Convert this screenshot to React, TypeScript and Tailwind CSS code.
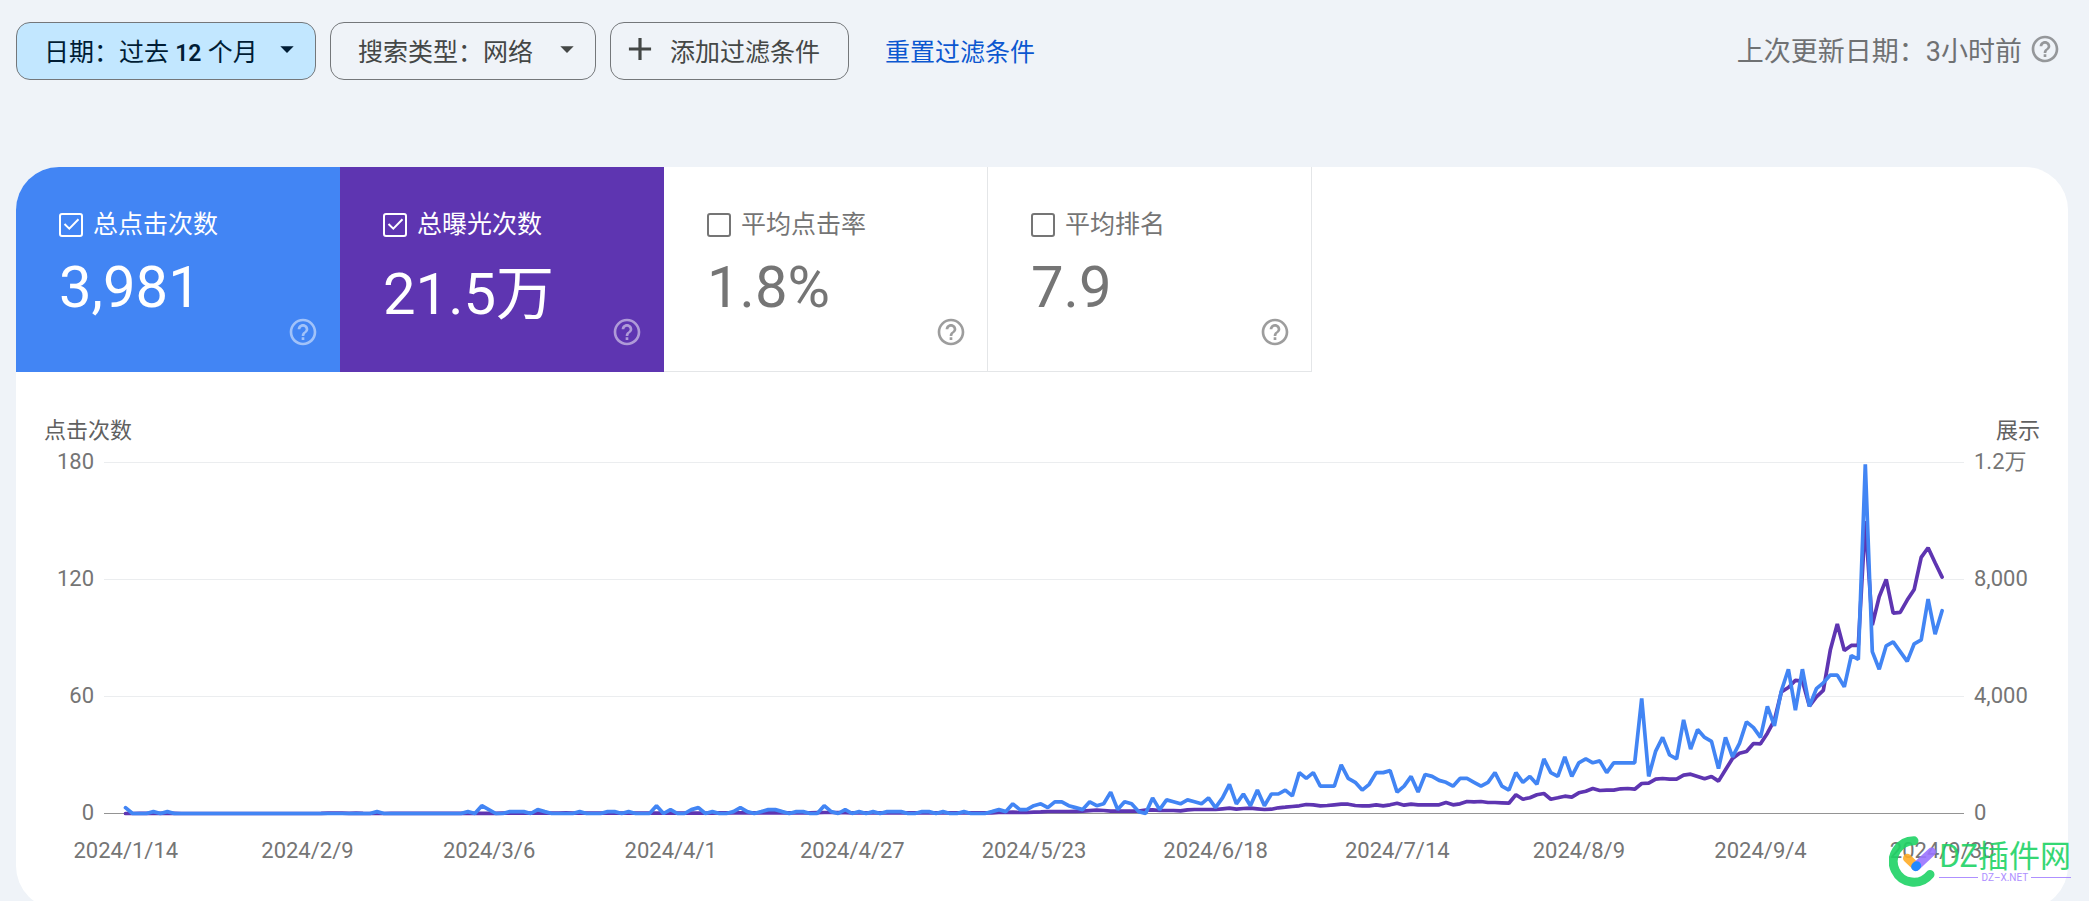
import { useState, type ReactNode } from "react";
import { MdAdd, MdArrowDropDown, MdHelpOutline } from "react-icons/md";

// Daily clicks, 2024/1/14 to 2024/9/30
const clicks = [
  3, 0, 0, 0, 1, 0, 1, 0, 0, 0, 0, 0, 0, 0, 0, 0, 0, 0, 0, 0, 0, 0, 0, 0, 0,
  0, 0, 0, 0, 0, 0, 0, 0, 0, 0, 0, 1, 0, 0, 0, 0, 0, 0, 0, 0, 0, 0, 0, 0, 1,
  0, 4, 2, 0, 0, 1, 1, 1, 0, 2, 1, 0, 0, 0, 0, 1, 0, 0, 0, 1, 1, 0, 1, 0, 0,
  0, 4, 0, 2, 0, 0, 2, 3, 0, 1, 0, 0, 1, 3, 1, 0, 1, 2, 2, 1, 0, 1, 1, 0, 0,
  4, 1, 0, 2, 0, 1, 0, 1, 0, 1, 1, 1, 0, 0, 1, 1, 0, 1, 0, 0, 1, 0, 0, 0, 1,
  2, 1, 5, 2, 2, 4, 5, 3, 6, 6, 4, 3, 2, 6, 4, 5, 11, 2, 6, 5, 1, 0, 8, 2, 7,
  6, 5, 7, 6, 5, 8, 3, 8, 15, 5, 10, 4, 12, 4, 10, 10, 12, 9, 21, 18, 21, 14, 14, 14, 25,
  18, 16, 12, 15, 21, 21, 22, 11, 14, 19, 11, 20, 19, 17, 16, 14, 18, 18, 16, 14, 16, 21, 14, 12, 21,
  16, 19, 15, 28, 21, 19, 29, 19, 26, 28, 26, 27, 21, 26, 26, 26, 26, 59, 19, 32, 39, 30, 28, 48, 33,
  43, 39, 37, 23, 39, 29, 36, 47, 44, 39, 55, 45, 63, 74, 53, 74, 55, 64, 67, 71, 71, 65, 81, 79, 179,
  83, 74, 86, 88, 83, 78, 87, 89, 110, 92, 104,
];

// Daily impressions over the same period
const impressions = [
  0, 0, 5, 5, 5, 5, 5, 5, 0, 0, 0, 0, 0, 0, 0, 0, 0, 0, 0, 0, 0, 0, 0, 0, 0,
  0, 0, 0, 5, 10, 10, 10, 5, 10, 5, 0, 0, 0, 5, 5, 5, 5, 5, 5, 5, 5, 5, 5, 5, 5,
  5, 5, 5, 5, 10, 10, 10, 10, 10, 10, 10, 10, 15, 20, 15, 10, 10, 10, 10, 10, 15, 15, 15, 15, 15,
  15, 15, 15, 15, 15, 15, 15, 15, 15, 15, 20, 20, 20, 25, 25, 25, 25, 25, 25, 20, 20, 20, 20, 25, 30,
  35, 35, 30, 30, 25, 25, 20, 20, 20, 25, 25, 25, 20, 20, 25, 25, 25, 20, 20, 20, 20, 20, 20, 20, 25,
  35, 40, 45, 35, 35, 45, 55, 68, 70, 70, 70, 75, 80, 95, 114, 102, 80, 80, 80, 80, 80, 115, 125, 102, 102,
  102, 90, 125, 137, 137, 137, 137, 160, 182, 148, 171, 182, 160, 137, 148, 194, 217, 239, 262, 308, 296, 262, 274, 296, 319,
  319, 274, 262, 262, 296, 262, 296, 353, 285, 319, 296, 296, 296, 296, 376, 296, 331, 410, 399, 410, 376, 376, 365, 353, 638,
  490, 536, 638, 684, 490, 536, 593, 559, 707, 764, 855, 787, 798, 800, 844, 855, 832, 1026, 1037, 1174, 1197, 1174, 1174, 1311, 1345,
  1265, 1186, 1265, 1106, 1493, 1881, 2063, 2120, 2394, 2383, 2747, 3192, 4161, 4309, 4549, 4526, 3671, 3990, 4207, 5586, 6475, 5575, 5746, 5746, 10000,
  6441, 7410, 8003, 6851, 6874, 7296, 7661, 8755, 9086, 8573, 8083,
];

const dates = [
  "2024/1/14", "2024/2/9", "2024/3/6", "2024/4/1", "2024/4/27", "2024/5/23",
  "2024/6/18", "2024/7/14", "2024/8/9", "2024/9/4", "2024/9/30",
];

const PLOT_W = 1860;
const PLOT_H = 351;

function toPoints(values: number[], max: number) {
  return values
    .map((v, i) => {
      const x = 21.5 + i * 6.987;
      const y = PLOT_H + 0.5 - (v / max) * PLOT_H;
      return `${x.toFixed(1)},${y.toFixed(1)}`;
    })
    .join(" ");
}

function Series({ values, max, color }: { values: number[]; max: number; color: string }) {
  return (
    <polyline
      points={toPoints(values, max)}
      fill="none"
      stroke={color}
      strokeWidth="3.700"
      strokeLinejoin="bevel"
      strokeLinecap="round"
      vectorEffect="non-scaling-stroke"
    />
  );
}

function FilterChip({ active, className, children }: { active?: boolean; className: string; children: ReactNode }) {
  return (
    <button
      type="button"
      aria-haspopup="menu"
      className={`flex h-[58px] items-center justify-between rounded-[14px] border border-[#74777a] pl-[27px] pr-3 ${
        active ? "bg-[#c2e7ff] text-[#001d35]" : "text-[#444746]"
      } ${className}`}
    >
      <span className="whitespace-pre pt-1">{children}</span>
      <MdArrowDropDown className="mb-1 size-8 shrink-0" />
    </button>
  );
}

interface Metric {
  id: string;
  label: string;
  value: string;
  unit?: string;
  tone: string;
  helpTone: string;
  on: boolean;
}

const plainTone = "text-[#757575] shadow-[inset_-1px_-1px_0_#e4e6e8]";

const metrics: Metric[] = [
  { id: "clicks", label: "总点击次数", value: "3,981", tone: "bg-[#4285f4] text-white", helpTone: "opacity-50", on: true },
  { id: "impressions", label: "总曝光次数", value: "21.5", unit: "万", tone: "bg-[#5e35b1] text-white", helpTone: "opacity-50", on: true },
  { id: "ctr", label: "平均点击率", value: "1.8%", tone: plainTone, helpTone: "opacity-70", on: false },
  { id: "position", label: "平均排名", value: "7.9", tone: plainTone, helpTone: "opacity-70", on: false },
];

function MetricTile({ metric }: { metric: Metric }) {
  const [checked, setChecked] = useState(metric.on);
  return (
    <div className={`relative h-[205px] w-[324px] pl-[43px] pt-10 ${metric.tone}`}>
      <label htmlFor={metric.id} className="flex items-center gap-[10px] text-[25px] leading-9">
        <span className="grid size-6 place-items-center">
          <input
            id={metric.id}
            type="checkbox"
            checked={checked}
            onChange={(e) => setChecked(e.target.checked)}
            className="col-start-1 row-start-1 size-6 appearance-none rounded-[3px] border-2 border-current"
          />
          {checked && (
            <svg viewBox="0 0 24 24" className="pointer-events-none col-start-1 row-start-1 size-6" aria-hidden="true">
              <path d="M5.500 11 L10.3 15.6 L19.500 6.2" fill="none" stroke="currentColor" strokeWidth="2" />
            </svg>
          )}
        </span>
        {metric.label}
      </label>
      <div className="mt-[10px] text-[58px] leading-[68px]">
        {metric.value}
        {metric.unit && <span className="font-['Noto_Sans_CJK_SC',sans-serif] leading-[73px]">{metric.unit}</span>}
      </div>
      <button type="button" aria-label="帮助" className={`absolute bottom-6 right-[21px] ${metric.helpTone}`}>
        <MdHelpOutline className="size-8" />
      </button>
    </div>
  );
}

function AxisLabels({ values, className }: { values: string[]; className: string }) {
  return (
    <div className={`flex h-[351px] shrink-0 flex-col justify-between ${className}`}>
      {values.map((v) => (
        <div key={v} className="flex h-0 items-center">
          {v}
        </div>
      ))}
    </div>
  );
}

function Chart() {
  return (
    <section className="text-[22px] leading-7 text-[#757575]">
      <div className="flex justify-between pl-7 pr-7 pt-[45px] text-[#616161]">
        <span>点击次数</span>
        <span>展示</span>
      </div>
      <div className="mt-[17px] flex">
        <AxisLabels values={["180", "120", "60", "0"]} className="w-[88px] items-end pr-[10px]" />
        <svg
          viewBox={`0 0 ${PLOT_W} ${PLOT_H + 1}`}
          preserveAspectRatio="none"
          className="h-[352px] min-w-0 flex-1 overflow-visible"
          role="img"
          aria-label="点击次数 / 展示"
        >
          {[0, 117, 234].map((y) => (
            <line key={y} x1="0" x2={PLOT_W} y1={y + 0.5} y2={y + 0.5} stroke="#ebedef" />
          ))}
          <line x1="0" x2={PLOT_W} y1={PLOT_H + 0.5} y2={PLOT_H + 0.5} stroke="#949494" />
          <Series values={impressions} max={12000} color="#5e35b1" />
          <Series values={clicks} max={180} color="#4285f4" />
        </svg>
        <AxisLabels values={["1.2万", "8,000", "4,000", "0"]} className="w-[104px] items-start pl-[10px]" />
      </div>
      <div className="mt-[23px] grid grid-cols-11 pl-[19px] pr-[35px] text-center">
        {dates.map((d) => (
          <span key={d}>{d}</span>
        ))}
      </div>
    </section>
  );
}

function Watermark() {
  return (
    <div className="absolute bottom-[14px] right-[18px] flex items-center opacity-90">
      <svg viewBox="0 0 150 152" className="h-[51px] w-[50px]" aria-hidden="true">
        <path d="M75 14 A62 62 0 1 0 123 115" fill="none" stroke="#1fd365" strokeWidth="27" strokeLinecap="round" />
        <path d="M55 66 L81 91" stroke="#ffac26" strokeWidth="26" strokeLinecap="round" />
        <path d="M128 47 L81 91" stroke="#9a74ff" strokeWidth="26" strokeLinecap="round" />
        <path d="M80 91.5 L83 88.500" stroke="#0a7dff" strokeWidth="27" strokeLinecap="round" />
      </svg>
      <div className="pb-[2px] font-['Noto_Sans_CJK_SC',sans-serif]">
        <div className="mb-[2px] text-[31px] leading-8 text-[#1fd365]">DZ插件网</div>
        <div className="flex items-center gap-[3px] text-[10px] leading-3 text-[#a684ff]">
          <span className="h-px flex-1 bg-current" />
          <span className="font-[Roboto,sans-serif]">DZ–X.NET</span>
          <span className="h-px flex-1 bg-current" />
        </div>
      </div>
    </div>
  );
}

export default function App() {
  return (
    <div className="relative h-screen overflow-hidden bg-[#eff3f8] font-[Roboto,'Noto_Sans_CJK_SC',sans-serif]">
      <header className="flex items-center gap-[14px] pl-4 pr-7 pt-[22px] text-[25px] leading-9">
        <FilterChip active className="w-[300px]">
          日期：过去 <span className="text-[23px] font-semibold">12</span> 个月
        </FilterChip>
        <FilterChip className="w-[266px]">搜索类型：网络</FilterChip>
        <button
          type="button"
          className="flex h-[58px] items-center gap-[11px] rounded-[14px] border border-[#74777a] pl-[10px] pr-7 text-[#444746]"
        >
          <MdAdd className="mb-1 size-[38px]" />
          <span className="pt-1">添加过滤条件</span>
        </button>
        <a href="#reset" className="ml-[22px] pt-1 text-[#0b57d0]">
          重置过滤条件
        </a>
        <div className="ml-auto flex items-center gap-[7px] text-[27px] text-[#6f7173]">
          <span className="pt-0.5">上次更新日期：3小时前</span>
          <button type="button" aria-label="帮助" className="mb-1 opacity-70">
            <MdHelpOutline className="size-8" />
          </button>
        </div>
      </header>
      <main className="ml-4 mr-[21px] mt-[87px] h-[742px] overflow-hidden rounded-[43px] bg-white">
        <div className="flex">
          {metrics.map((m) => (
            <MetricTile key={m.id} metric={m} />
          ))}
        </div>
        <Chart />
      </main>
      <Watermark />
    </div>
  );
}
